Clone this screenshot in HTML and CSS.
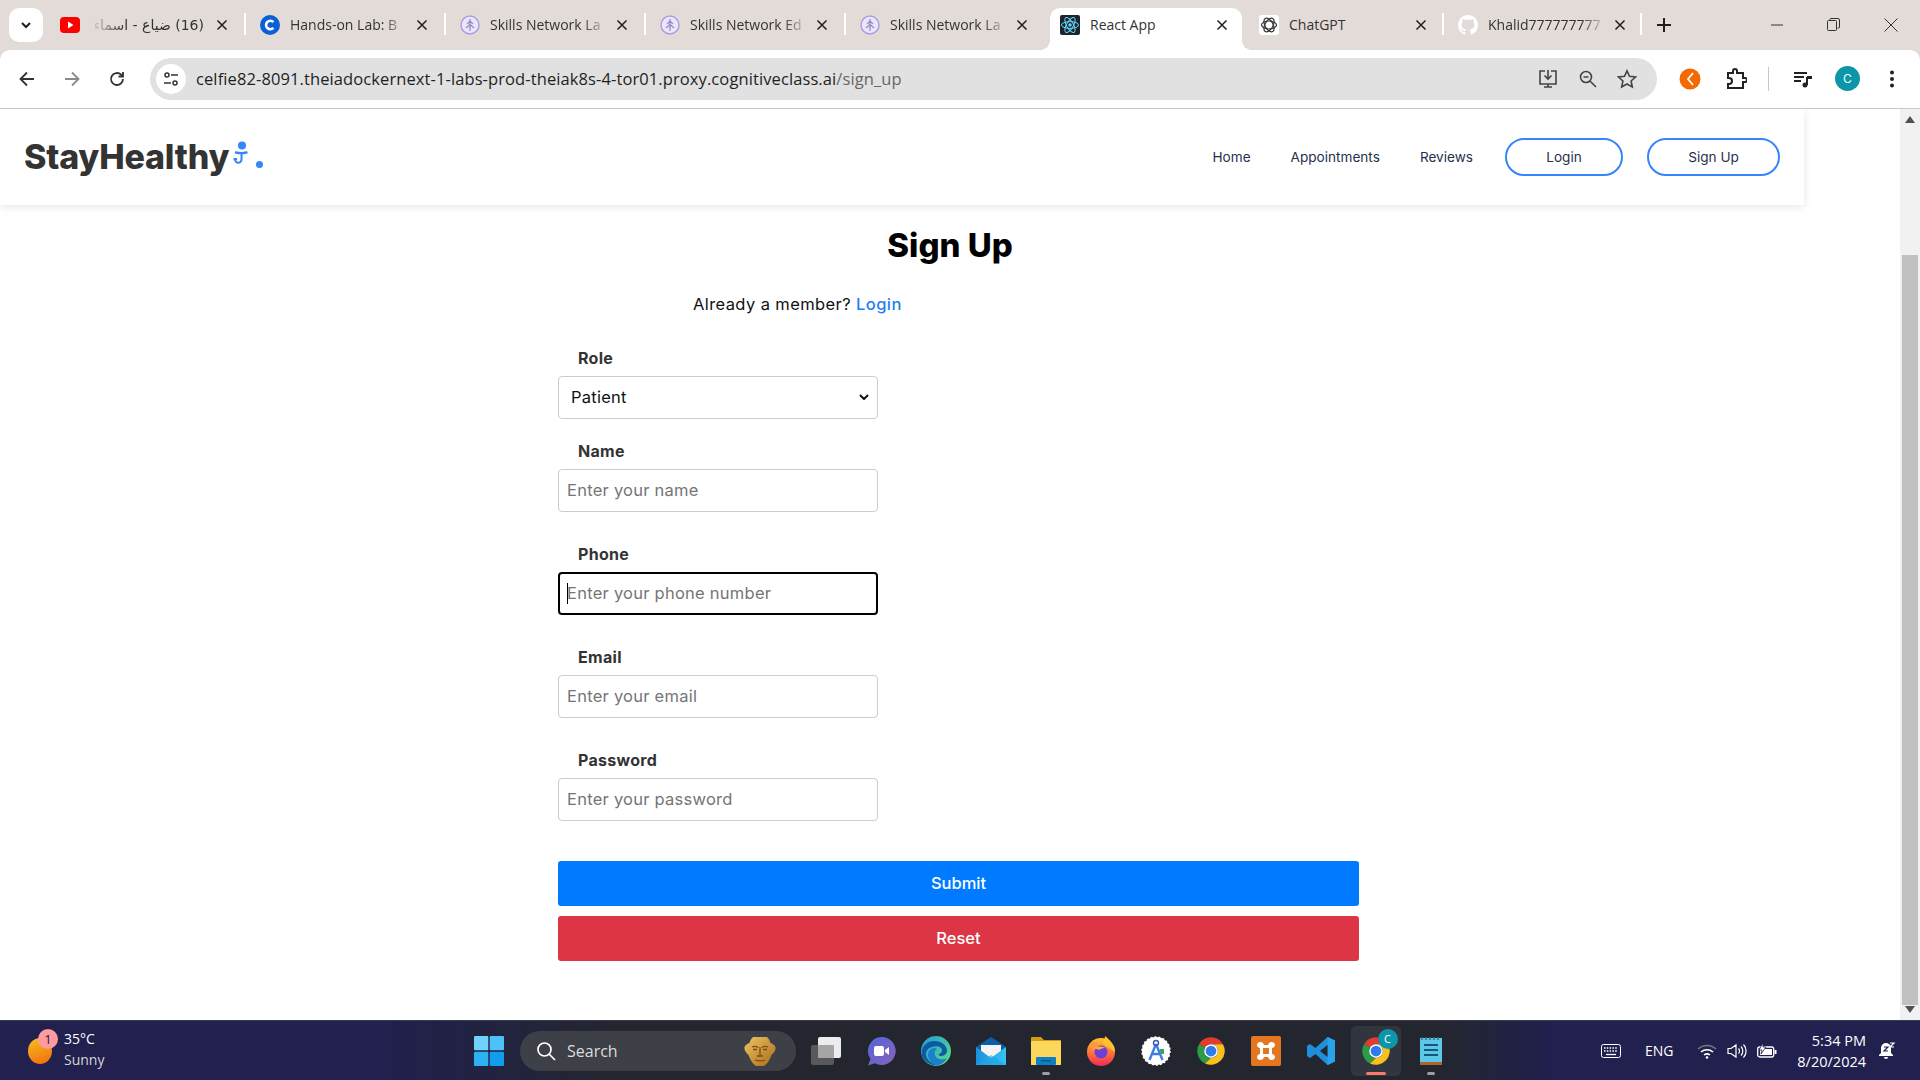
FILE: index.html
```html
<!DOCTYPE html>
<html lang="en">

<head>
    <meta charset="UTF-8">
    <meta name="viewport" content="width=device-width, initial-scale=1.0">
    <title>React App</title>
    <link rel="stylesheet" href="styles.css">
</head>

<body>
    <svg class="defs" width="0" height="0">
        <defs>
            <linearGradient id="g-edge" x1="0" y1="0" x2="1" y2="1"><stop offset="0" stop-color="#1aa0d8" /><stop offset="1" stop-color="#62dc7c" /></linearGradient>
            <linearGradient id="g-meet" x1="0" y1="0" x2="1" y2="1"><stop offset="0" stop-color="#4f66d8" /><stop offset="1" stop-color="#8a62bc" /></linearGradient>
            <linearGradient id="g-mail" x1="0" y1="0" x2="1" y2="0"><stop offset="0" stop-color="#1c8fd8" /><stop offset="1" stop-color="#36c4f5" /></linearGradient>
            <linearGradient id="g-fox" x1="0" y1="0" x2="0" y2="1"><stop offset="0" stop-color="#ffc22e" /><stop offset=".55" stop-color="#ff7139" /><stop offset="1" stop-color="#f0285c" /></linearGradient>
            <linearGradient id="g-mask" x1="0" y1="0" x2="1" y2="1"><stop offset="0" stop-color="#f0c465" /><stop offset="1" stop-color="#a86a18" /></linearGradient>
        </defs>
        <symbol id="i-close" viewBox="0 0 12 12"><path d="M1.500 1.500l9 9M10.500 1.500l-9 9" fill="none" stroke="#1f1f1f" stroke-width="1.500" /></symbol>
        <symbol id="i-skills" viewBox="0 0 20 20">
            <circle cx="10" cy="10" r="9" fill="#ece6fa" stroke="#a99be0" stroke-width="1.400" />
            <path d="M10 4v12M10 6l-3 3M10 6l3 3M10 9.500l-4 3.500M10 9.500l4 3.500" fill="none" stroke="#9a8cc4" stroke-width="1.300" />
        </symbol>
        <symbol id="i-chrome" viewBox="0 0 24 24">
            <path d="M12 1a11 11 0 0 1 9.530 5.500H12a5.500 5.500 0 0 0-4.760 2.750L2.470 6.500A11 11 0 0 1 12 1z" fill="#e33b2e" />
            <path d="M2.470 6.500l4.770 2.750A5.500 5.500 0 0 0 12 17.500l-4.770 4.400A11 11 0 0 1 2.470 6.500z" fill="#2a9d46" />
            <path d="M21.530 6.500A11 11 0 0 1 7.230 21.900L12 17.500a5.500 5.500 0 0 0 4.760-8.250 5.500 5.500 0 0 0-4.760-2.750z" fill="#f7c01d" />
            <circle cx="12" cy="12" r="5.500" fill="#fff" />
            <circle cx="12" cy="12" r="4.300" fill="#2f7bea" />
        </symbol>
    </svg>

    <div class="tabstrip">
        <button class="tab-search">
            <svg width="12" height="12" viewBox="0 0 12 12"><path d="M2 4l4 4 4-4" fill="none" stroke="#1f1f1f" stroke-width="2" /></svg>
        </button>
        <div class="tab">
            <svg class="favicon" viewBox="0 0 20 20"><rect y="2" width="20" height="16" rx="4" fill="#f00" /><path d="M8 6.500l5.500 3.500L8 13.500z" fill="#fff" /></svg>
            <span class="tab-title tab-title-rtl" dir="rtl">(16) ضياع - اسماء</span>
            <svg class="tab-close"><use href="#i-close" /></svg>
        </div>
        <div class="tab">
            <svg class="favicon" viewBox="0 0 20 20"><circle cx="10" cy="10" r="10" fill="#0b5fd6" /><path d="M13.400 7.200a4.200 4.200 0 1 0 0 5.600" fill="none" stroke="#fff" stroke-width="2.600" /></svg>
            <span class="tab-title">Hands-on Lab: B</span>
            <svg class="tab-close"><use href="#i-close" /></svg>
        </div>
        <div class="tab">
            <svg class="favicon"><use href="#i-skills" /></svg>
            <span class="tab-title">Skills Network La</span>
            <svg class="tab-close"><use href="#i-close" /></svg>
        </div>
        <div class="tab">
            <svg class="favicon"><use href="#i-skills" /></svg>
            <span class="tab-title">Skills Network Ed</span>
            <svg class="tab-close"><use href="#i-close" /></svg>
        </div>
        <div class="tab tab-before-active">
            <svg class="favicon"><use href="#i-skills" /></svg>
            <span class="tab-title">Skills Network La</span>
            <svg class="tab-close"><use href="#i-close" /></svg>
        </div>
        <div class="tab tab-active">
            <svg class="favicon" viewBox="0 0 20 20">
                <rect width="20" height="20" rx="2" fill="#20232a" />
                <g fill="none" stroke="#61dafb" stroke-width="1">
                    <ellipse cx="10" cy="10" rx="8.500" ry="3.400" />
                    <ellipse cx="10" cy="10" rx="8.500" ry="3.400" transform="rotate(60 10 10)" />
                    <ellipse cx="10" cy="10" rx="8.500" ry="3.400" transform="rotate(120 10 10)" />
                </g>
                <circle cx="10" cy="10" r="1.700" fill="#61dafb" />
            </svg>
            <span class="tab-title tab-title-plain">React App</span>
            <svg class="tab-close"><use href="#i-close" /></svg>
        </div>
        <div class="tab tab-gpt">
            <svg class="favicon" viewBox="0 0 20 20">
                <rect width="20" height="20" rx="3" fill="#fff" />
                <g fill="none" stroke="#333" stroke-width="1.200">
                    <ellipse cx="10" cy="10" rx="7.500" ry="4" />
                    <ellipse cx="10" cy="10" rx="7.500" ry="4" transform="rotate(60 10 10)" />
                    <ellipse cx="10" cy="10" rx="7.500" ry="4" transform="rotate(120 10 10)" />
                </g>
            </svg>
            <span class="tab-title tab-title-plain">ChatGPT</span>
            <svg class="tab-close"><use href="#i-close" /></svg>
        </div>
        <div class="tab tab-github">
            <svg class="favicon" viewBox="0 0 16 16"><path fill="#fff" d="M8 0C3.580 0 0 3.580 0 8c0 3.540 2.290 6.530 5.470 7.590.4.070.55-.17.55-.38 0-.19-.01-.82-.01-1.490-2.010.37-2.530-.49-2.690-.94-.09-.23-.48-.94-.82-1.130-.28-.15-.68-.52-.01-.53.63-.01 1.080.58 1.230.82.72 1.210 1.870.87 2.330.66.07-.52.28-.87.51-1.070-1.780-.2-3.640-.89-3.640-3.950 0-.87.31-1.590.82-2.150-.08-.2-.36-1.020.08-2.120 0 0 .67-.21 2.200.82.64-.18 1.320-.27 2-.27.68 0 1.360.09 2 .27 1.530-1.040 2.200-.82 2.200-.82.44 1.100.16 1.920.08 2.120.51.56.82 1.270.82 2.150 0 3.070-1.870 3.750-3.650 3.950.29.25.54.73.54 1.480 0 1.070-.01 1.930-.01 2.200 0 .21.15.46.55.38A8.013 8.013 0 0016 8c0-4.420-3.580-8-8-8z" /></svg>
            <span class="tab-title">Khalid777777777</span>
            <svg class="tab-close"><use href="#i-close" /></svg>
        </div>
        <svg class="new-tab" width="14" height="14" viewBox="0 0 14 14"><path d="M7 0v14M0 7h14" stroke="#1f1f1f" stroke-width="2" /></svg>
        <div class="window-controls">
            <svg width="12" height="12" viewBox="0 0 12 12"><path d="M0 6h12" stroke="#333" stroke-width="1" /></svg>
            <svg width="13" height="13" viewBox="0 0 13 13"><path d="M3 2.500V1.500a1 1 0 0 1 1-1h7a1.500 1.500 0 0 1 1.500 1.500v7a1 1 0 0 1-1 1h-1M1.500 2.500h7a1 1 0 0 1 1 1v8a1 1 0 0 1-1 1h-7a1 1 0 0 1-1-1v-8a1 1 0 0 1 1-1z" fill="none" stroke="#333" /></svg>
            <svg width="14" height="14" viewBox="0 0 14 14"><path d="M.5.5l13 13M13.500.5l-13 13" stroke="#333" stroke-width="1" /></svg>
        </div>
    </div>

    <div class="toolbar">
        <svg class="tool-btn" width="18" height="18" viewBox="0 0 18 18"><path d="M16 9H3M9 2.500L2.500 9 9 15.500" fill="none" stroke="#333" stroke-width="1.800" /></svg>
        <svg class="tool-btn" width="18" height="18" viewBox="0 0 18 18"><path d="M2 9h13M9 2.500L15.500 9 9 15.500" fill="none" stroke="#8b8b8b" stroke-width="1.800" /></svg>
        <svg class="tool-btn" width="18" height="18" viewBox="0 0 18 18"><path d="M15 9a6 6 0 1 1-1.800-4.300L15 6.500M15 2v4.500h-4.500" fill="none" stroke="#333" stroke-width="1.800" /></svg>
        <div class="omnibox">
            <span class="site-info">
                <svg width="16" height="16" viewBox="0 0 16 16"><g fill="none" stroke="#333" stroke-width="1.500"><circle cx="4" cy="4" r="2" /><path d="M8 4h7M1 12h7" /><circle cx="12" cy="12" r="2" /></g></svg>
            </span>
            <span class="url">celfie82-8091.theiadockernext-1-labs-prod-theiak8s-4-tor01.proxy.cognitiveclass.ai<span class="url-path">/sign_up</span></span>
            <span class="omni-actions">
                <svg width="22" height="22" viewBox="0 0 22 22"><path d="M8 3H3v13h16V3h-5M7 19h8M11 16v3M11 2v9M7.500 7.500L11 11l3.500-3.500" fill="none" stroke="#444" stroke-width="1.600" /></svg>
                <svg width="20" height="20" viewBox="0 0 20 20"><circle cx="8" cy="8" r="5.500" fill="none" stroke="#444" stroke-width="1.600" /><path d="M12.200 12.200L18 18M5.500 8h5" stroke="#444" stroke-width="1.600" /></svg>
                <svg width="20" height="20" viewBox="0 0 20 20"><path d="M10 1.800l2.500 5.500 6 .7-4.400 4 1.200 6L10 15l-5.300 3 1.200-6-4.400-4 6-.7z" fill="none" stroke="#444" stroke-width="1.600" /></svg>
            </span>
        </div>
        <div class="ext-actions">
            <svg class="ext-orange" width="22" height="22" viewBox="0 0 22 22"><circle cx="11" cy="11" r="10.500" fill="#f56a00" /><path d="M14 5l-5 6 5 6" fill="none" stroke="#fff" stroke-width="1.800" /></svg>
            <svg class="ext-puzzle" width="22" height="22" viewBox="0 0 22 22"><path d="M3 5h5V3a2 2 0 0 1 4 0v2h6v5h2a2 2 0 0 1 0 4h-2v6H3v-4h1a2.500 2.500 0 0 0 0-6H3z" fill="none" stroke="#222" stroke-width="2" /></svg>
            <span class="ext-sep"></span>
            <svg class="ext-media" width="20" height="20" viewBox="0 0 20 20"><path d="M1 4h13M1 8h10M1 12h7" stroke="#222" stroke-width="2" /><path d="M14 8v8" stroke="#222" stroke-width="2" /><circle cx="12" cy="16" r="2.500" fill="#222" /><path d="M14 7h5v3h-5z" fill="#222" /></svg>
            <span class="avatar">C</span>
            <svg class="ext-menu" width="6" height="18" viewBox="0 0 6 18"><circle cx="3" cy="2.500" r="2" fill="#222" /><circle cx="3" cy="9" r="2" fill="#222" /><circle cx="3" cy="15.500" r="2" fill="#222" /></svg>
        </div>
    </div>

    <div class="viewport">
        <div class="page">
            <nav class="navbar">
                <a class="logo">StayHealthy
                    <svg class="logo-icon" width="16" height="24" viewBox="0 0 16 24">
                        <circle cx="9" cy="4.500" r="4" fill="#3685fb" />
                        <path d="M3 11.500c3 .8 7 .8 10.500 0" fill="none" stroke="#3685fb" stroke-width="2.400" stroke-linecap="round" />
                        <path d="M8.500 12v6.500a3.200 3.200 0 0 1-6.400 0" fill="none" stroke="#3685fb" stroke-width="2" />
                        <path d="M.5 18h3.500" stroke="#3685fb" stroke-width="2" />
                    </svg>
                    <span class="logo-dot"></span>
                </a>
                <ul class="nav-links">
                    <li><a>Home</a></li>
                    <li><a>Appointments</a></li>
                    <li class="nav-reviews"><a>Reviews</a></li>
                    <li><button class="nav-btn nav-login">Login</button></li>
                    <li><button class="nav-btn nav-signup">Sign Up</button></li>
                </ul>
            </nav>

            <main class="signup">
                <h1 class="signup-title">Sign Up</h1>
                <p class="signup-member">Already a member? <a>Login</a></p>
                <form class="signup-form">
                    <div class="form-group form-group-tight">
                        <label for="role">Role</label>
                        <select id="role" class="form-control form-select">
                            <option>Patient</option>
                        </select>
                    </div>
                    <div class="form-group">
                        <label for="name">Name</label>
                        <input id="name" class="form-control" type="text" placeholder="Enter your name">
                    </div>
                    <div class="form-group">
                        <label for="phone">Phone</label>
                        <div class="focus-wrap">
                            <input id="phone" class="form-control form-control-focus" type="tel" placeholder="Enter your phone number">
                            <span class="caret"></span>
                        </div>
                    </div>
                    <div class="form-group">
                        <label for="email">Email</label>
                        <input id="email" class="form-control" type="email" placeholder="Enter your email">
                    </div>
                    <div class="form-group">
                        <label for="password">Password</label>
                        <input id="password" class="form-control" type="password" placeholder="Enter your password">
                    </div>
                    <button class="form-btn form-btn-submit" type="button">Submit</button>
                    <button class="form-btn form-btn-reset" type="button">Reset</button>
                </form>
            </main>
        </div>

        <div class="scrollbar">
            <svg width="10" height="7" viewBox="0 0 10 7"><path d="M5 0l5 7H0z" fill="#505050" /></svg>
            <div class="scroll-track"><div class="scroll-thumb"></div></div>
            <svg width="10" height="7" viewBox="0 0 10 7"><path d="M5 7L0 0h10z" fill="#505050" /></svg>
        </div>
    </div>

    <footer class="taskbar">
        <div class="weather">
            <span class="weather-sun"></span>
            <span class="weather-badge">1</span>
            <div class="weather-text">
                <span>35°C</span>
                <span class="weather-sub">Sunny</span>
            </div>
        </div>

        <span class="start-btn">
            <svg width="30" height="30" viewBox="0 0 30 30">
                <rect width="14.300" height="14.300" rx="1" fill="#6fd3fb" />
                <rect x="15.700" width="14.300" height="14.300" rx="1" fill="#4cc2f8" />
                <rect y="15.700" width="14.300" height="14.300" rx="1" fill="#2db0f4" />
                <rect x="15.700" y="15.700" width="14.300" height="14.300" rx="1" fill="#129cee" />
            </svg>
        </span>

        <div class="search-pill">
            <svg width="20" height="20" viewBox="0 0 20 20"><circle cx="8.500" cy="8.500" r="6.500" fill="none" stroke="#fff" stroke-width="1.700" /><path d="M13 13l6 6" stroke="#fff" stroke-width="1.700" /></svg>
            <span class="search-label">Search</span>
            <svg class="search-mask" width="32" height="30" viewBox="0 0 32 30">
                <path d="M9 1h14c2 2 3 4 3.500 6 2 .5 4 2 5 4 .5 3-1.500 6-4 8-1.500 4-4 9-7.500 11h-8c-3.500-2-6-7-7.500-11-2.500-2-4.500-5-4-8 1-2 3-3.500 5-4C6 5 7 3 9 1z" fill="url(#g-mask)" />
                <path d="M8 11c2-1 4-1 6 .5M18 11.500c2-1.500 4-1.500 6-.5M9 13.500h4M19 13.500h4M16 11v8M13 20h6M11 24c3 1 7 1 10 0" fill="none" stroke="#7a4d12" stroke-width="1.300" />
            </svg>
        </div>

        <div class="apps">
            <span class="app">
                <svg width="30" height="28" viewBox="0 0 30 28"><rect y="8" width="23" height="20" rx="2" fill="#595959" /><rect x="7" y="0" width="23" height="21" rx="2" fill="#ececec" /><rect x="7" y="8" width="16" height="13" rx="1" fill="#a5a5a5" /></svg>
            </span>
            <span class="app">
                <svg width="30" height="30" viewBox="0 0 30 30"><path d="M15.500 1a14 14 0 1 1-6.500 26.300L2 29.500l2.500-6.500A14 14 0 0 1 15.500 1z" fill="url(#g-meet)" /><rect x="8" y="10" width="10" height="10" rx="2" fill="#fff" /><path d="M19 14l4-3v8l-4-3z" fill="#fff" /></svg>
            </span>
            <span class="app">
                <svg width="30" height="30" viewBox="0 0 30 30">
                    <circle cx="15" cy="15" r="15" fill="url(#g-edge)" />
                    <path d="M1 20C-1 10 7 4 15 5c7 1 11 5 11 10 0 3-3 5-7 5l-2-2c3 0 4-2 4-4 0-3-5-5-10-3-4 1-6 4-6 7 0 4 4 10 12 11A15 15 0 0 1 1 20z" fill="#0f5aa6" />
                    <path d="M8 15c2-3 6-4 8-2-2 1-3 3-2 6 1 4 7 6 12 3-2 4-7 8-12 7C9 27 5 20 8 15z" fill="#1a7fd0" />
                </svg>
            </span>
            <span class="app">
                <svg width="30" height="28" viewBox="0 0 30 28">
                    <path d="M15 0l15 10v4H0v-4z" fill="#0f5fa8" />
                    <path d="M5 8h20v9l-10 5-10-5z" fill="#f4f4f4" />
                    <path d="M0 10l15 11 15-11v18H0z" fill="url(#g-mail)" />
                    <path d="M0 28l15-10 15 10z" fill="#22a5e8" opacity=".6" />
                </svg>
            </span>
            <span class="app app-running">
                <svg width="30" height="28" viewBox="0 0 30 28">
                    <path d="M0 1a1 1 0 0 1 1-1h9l3 3h17v25H0z" fill="#d69b12" />
                    <rect y="4" width="30" height="24" rx="1" fill="#fbd75b" />
                    <rect x="5" y="20" width="20" height="8" rx="1" fill="#0e7fc4" />
                    <rect x="10" y="23" width="10" height="1.500" fill="#0a5a90" />
                </svg>
            </span>
            <span class="app">
                <svg width="28" height="30" viewBox="0 0 28 30">
                    <circle cx="14" cy="16" r="14" fill="url(#g-fox)" />
                    <path d="M18 0c5 4 10 9 10 16L15 7c2-2 3-4 3-7z" fill="#ffc22e" />
                    <path d="M2 9c1-2 3-3 5-3 1 2 5 3 8 3l-5 9z" fill="#ff9640" />
                    <circle cx="14" cy="16" r="6.500" fill="#6e3fd8" />
                    <path d="M7 12c3-2 8-2 11 0-3 0-5 1-6 2z" fill="#ffb02e" />
                </svg>
            </span>
            <span class="app">
                <svg width="30" height="30" viewBox="0 0 30 30">
                    <circle cx="15" cy="15" r="14" fill="#fff" stroke="#fff" stroke-width="1.500" stroke-dasharray="2 2" />
                    <path d="M15 8L8.500 24M15 8l6.500 16M10.500 18h9" fill="none" stroke="#3e7ee6" stroke-width="2.400" />
                    <circle cx="15" cy="7" r="2.500" fill="none" stroke="#3e5fa6" stroke-width="1.500" />
                    <rect x="19" y="13" width="4" height="5" fill="#3ba55d" />
                </svg>
            </span>
            <span class="app">
                <svg width="30" height="30"><use href="#i-chrome" /></svg>
            </span>
            <span class="app">
                <svg width="30" height="30" viewBox="0 0 30 30">
                    <rect width="30" height="30" rx="2" fill="#e4761f" />
                    <path d="M6 9c0-3 4-4 6-2l1 2h4l1-2c2-2 6-1 6 2 0 2-2 3-3 3v6c1 0 3 1 3 3 0 3-4 4-6 2l-1-2h-4l-1 2c-2 2-6 1-6-2 0-2 2-3 3-3v-6c-1 0-3-1-3-3z" fill="#fff" />
                    <path d="M12 12h6v6h-6z" fill="#e4761f" />
                </svg>
            </span>
            <span class="app">
                <svg width="30" height="30" viewBox="0 0 30 30"><path d="M21.500 1L29 4.500v21L21.500 29 9.500 18l-5.500 4-3-2v-10l3-2 5.500 4z" fill="#1e8fd8" /><path d="M21.500 1L29 4.500v21L21.500 29z" fill="#2aa3ec" /><path d="M21.500 9v12l-7.500-6z" fill="#23262f" /></svg>
            </span>
            <span class="app app-active">
                <svg width="30" height="30"><use href="#i-chrome" /></svg>
                <span class="app-profile">C</span>
            </span>
            <span class="app app-running">
                <svg width="22" height="30" viewBox="0 0 22 30"><rect y="2" width="22" height="25" fill="#5cc7e8" /><rect y="26" width="22" height="3" fill="#b0642a" /><path d="M2 1v3M6 1v3M10 1v3M14 1v3M18 1v3" stroke="#2d6f8c" stroke-width="1.500" /><path d="M4 9h14M4 14h14M4 19h14" stroke="#11587a" stroke-width="2" /></svg>
            </span>
        </div>

        <div class="tray">
            <svg class="tray-keyboard" width="20" height="14" viewBox="0 0 20 14"><rect x=".5" y=".5" width="19" height="13" rx="2" fill="none" stroke="#fff" /><path d="M3 4h14M3 7h14" stroke="#fff" stroke-dasharray="1.500 1.300" stroke-width="1.300" /><path d="M5 10.500h10" stroke="#fff" stroke-width="1.300" /></svg>
            <span class="tray-lang">ENG</span>
            <svg class="tray-wifi" width="20" height="16" viewBox="0 0 20 16"><g fill="none" stroke-width="1.500"><path d="M1 6a13 13 0 0 1 18 0" stroke="#777" /><path d="M4 9a9 9 0 0 1 12 0M7 12a5 5 0 0 1 6 0" stroke="#fff" /></g><circle cx="10" cy="14.500" r="1.300" fill="#fff" /></svg>
            <svg class="tray-volume" width="20" height="16" viewBox="0 0 20 16"><path d="M1 5.500h3L9 2v12L4 10.500H1zM11.500 5.500a3.500 3.500 0 0 1 0 5M14 3.500a6.500 6.500 0 0 1 0 9M16.500 1.500a9.500 9.500 0 0 1 0 13" fill="none" stroke="#fff" stroke-width="1.200" /></svg>
            <svg class="tray-battery" width="20" height="16" viewBox="0 0 20 16"><rect x=".7" y="4" width="16" height="10" rx="2" fill="none" stroke="#fff" stroke-width="1.300" /><rect x="3" y="6" width="12" height="6" fill="#fff" /><rect x="17.500" y="7" width="2" height="4" fill="#fff" /><path d="M6 0L2 7h3l-1 4 5-7H6z" fill="#fff" stroke="#21204f" stroke-width=".8" /></svg>
            <div class="tray-clock">
                <span>5:34 PM</span>
                <span>8/20/2024</span>
            </div>
            <svg class="tray-bell" width="18" height="18" viewBox="0 0 18 18"><path d="M8 1a5 5 0 0 1 5 5v5l2 2v1H1v-1l2-2V6a5 5 0 0 1 5-5zM6 15h4a2 2 0 0 1-4 0z" fill="#fff" /><path d="M6 5h4l-4 4h4" fill="none" stroke="#21204f" stroke-width="1.200" /><path d="M12 1h4l-4 4h4" fill="none" stroke="#fff" stroke-width="1.200" /></svg>
        </div>
    </footer>
</body>

</html>
```

FILE: styles.css
```css
* {
    margin: 0;
    padding: 0;
    box-sizing: border-box;
}

body {
    display: flex;
    flex-direction: column;
    height: 100vh;
    overflow: hidden;
    font-family: Inter, "Liberation Sans", sans-serif;
    background-color: #e3dbd8;
}

.defs {
    position: absolute;
}

/* browser tabs */
.tabstrip {
    display: flex;
    align-items: center;
    height: 50px;
    padding-left: 9px;
    background-color: #e3dbd8;
    font-family: "Open Sans", sans-serif;
    font-size: 14px;
    color: #333;
}

.tab-search {
    display: flex;
    justify-content: center;
    align-items: center;
    width: 34px;
    height: 34px;
    margin-right: 3px;
    border: none;
    border-radius: 10px;
    background-color: #fff;
}

.tab {
    position: relative;
    display: flex;
    align-items: center;
    flex: none;
    align-self: flex-end;
    width: 200px;
    height: 42px;
    padding: 0 16px 8px 14px;
    border-right: 2px solid #fff;
    border-image: linear-gradient(transparent 6px, #fff 6px, #fff 27px, transparent 27px) 1;
}

.tab-before-active {
    width: 204px;
    padding-right: 22px;
    border-right: none;
}

.tab-active {
    width: 192px;
    padding: 0 14px 8px 10px;
    border: none;
    border-radius: 10px 10px 0 0;
    background-color: #fff;
}

.tab-active::before,
.tab-active::after {
    content: "";
    position: absolute;
    bottom: 0;
    width: 10px;
    height: 10px;
}

.tab-active::before {
    left: -10px;
    background: radial-gradient(circle at 0 0, transparent 10px, #fff 10px);
}

.tab-active::after {
    right: -10px;
    background: radial-gradient(circle at 100% 0, transparent 10px, #fff 10px);
}

.tab-gpt {
    width: 202px;
    padding-left: 17px;
    padding-right: 15px;
}

.tab-github {
    width: 198px;
    padding-right: 14px;
}

.favicon {
    flex: none;
    width: 20px;
    height: 20px;
    margin-right: 10px;
}

.tab-title {
    flex: 1;
    overflow: hidden;
    white-space: nowrap;
    -webkit-mask-image: linear-gradient(90deg, #000 80%, transparent 102%);
    mask-image: linear-gradient(90deg, #000 80%, transparent 102%);
}

.tab-title-plain {
    -webkit-mask-image: none;
    mask-image: none;
}

.tab-title-rtl {
    font-family: "DejaVu Sans", sans-serif;
    font-size: 14px;
    padding-right: 2px;
    -webkit-mask-image: linear-gradient(90deg, transparent, #000 30%);
    mask-image: linear-gradient(90deg, transparent, #000 30%);
}

.tab-close {
    flex: none;
    width: 12px;
    height: 12px;
    margin-left: 10px;
}

.new-tab {
    margin-left: 15px;
}

.window-controls {
    display: flex;
    align-items: center;
    gap: 44px;
    margin-left: auto;
    padding-right: 22px;
}

/* address bar row */
.toolbar {
    display: flex;
    align-items: center;
    height: 59px;
    padding-left: 18px;
    border-top-left-radius: 10px;
    border-top-right-radius: 10px;
    border-bottom: 1px solid #c9c9c9;
    background-color: #fff;
}

.tool-btn {
    flex: none;
    margin-right: 27px;
}

.omnibox {
    display: flex;
    align-items: center;
    width: 1507px;
    height: 42px;
    margin-left: -3px;
    padding-left: 6px;
    border-radius: 21px;
    background-color: #e1e1e1;
}

.site-info {
    display: flex;
    justify-content: center;
    align-items: center;
    width: 30px;
    height: 30px;
    border-radius: 50%;
    background-color: #fff;
}

.url {
    margin-left: 10px;
    font-family: "Open Sans", sans-serif;
    font-size: 16.5px;
    letter-spacing: 0.1px;
    color: #1f1f1f;
    white-space: nowrap;
}

.url-path {
    color: #666;
}

.omni-actions {
    display: flex;
    align-items: center;
    gap: 19px;
    margin-left: auto;
    padding-right: 20px;
}

.ext-actions {
    display: flex;
    align-items: center;
    margin-left: 22px;
}

.ext-puzzle {
    margin-left: 24px;
}

.ext-sep {
    width: 1px;
    height: 24px;
    margin: 0 24px 0 21px;
    background-color: #c7c7c7;
}

.avatar {
    display: flex;
    justify-content: center;
    align-items: center;
    width: 25px;
    height: 25px;
    margin-left: 22px;
    border-radius: 50%;
    background-color: #0c96a8;
    color: #fff;
    font-size: 12px;
}

.ext-menu {
    margin-left: 29px;
}

/* page */
.viewport {
    display: flex;
    height: 912px;
    background-color: #fff;
}

.page {
    flex: 1;
    overflow: hidden;
}

.navbar {
    display: flex;
    justify-content: space-between;
    align-items: center;
    width: 1804px;
    height: 96px;
    padding: 0 24px;
    background-color: #fff;
    box-shadow: 0 2px 8px rgba(0, 0, 0, 0.1);
}

.logo {
    display: flex;
    align-items: center;
    font-size: 34px;
    font-weight: 800;
    letter-spacing: -0.2px;
    color: #333;
}

.logo-icon {
    margin-left: 4px;
    margin-top: -8px;
}

.logo-dot {
    width: 7px;
    height: 7px;
    margin-left: 7px;
    margin-top: 15px;
    border-radius: 50%;
    background-color: #3685fb;
}

.nav-links {
    display: flex;
    align-items: center;
    gap: 40px;
    list-style: none;
    font-size: 13.6px;
    color: #25314d;
}

.nav-reviews {
    margin-right: -8px;
}

.nav-btn {
    height: 38px;
    border: 2px solid #3685fb;
    border-radius: 20px;
    background-color: #fff;
    font-family: inherit;
    font-size: 13.6px;
    color: #25314d;
}

.nav-login {
    width: 118px;
}

.nav-signup {
    width: 133px;
    margin-left: -16px;
}

/* sign up form */
.signup {
    padding-top: 17px;
}

.signup-title {
    font-size: 33px;
    font-weight: 800;
    line-height: 46px;
    text-align: center;
    color: #000;
}

.signup-member {
    margin: 24px 0 0 693px;
    font-size: 16.5px;
    letter-spacing: 0.4px;
    line-height: 24px;
    color: #111;
}

.signup-member a {
    color: #1f7df5;
    font-weight: 500;
}

.signup-form {
    width: 801px;
    margin: 29px 0 0 558px;
}

.form-group {
    margin-bottom: 29px;
}

.form-group-tight {
    margin-bottom: 19px;
}

.form-group label {
    display: block;
    height: 25px;
    margin-bottom: 6px;
    padding-left: 20px;
    font-size: 16px;
    font-weight: 700;
    letter-spacing: 0.3px;
    line-height: 26px;
    color: #333;
}

.form-control {
    display: block;
    width: 320px;
    height: 43px;
    padding: 0 8px;
    border: 1px solid #ccc;
    border-radius: 4px;
    background-color: #fff;
    font-family: inherit;
    font-size: 16.5px;
    letter-spacing: 0.25px;
    color: #111;
}

.form-control::placeholder {
    color: #757575;
}

.form-select {
    padding-left: 12px;
    appearance: none;
    background: #fff url("data:image/svg+xml,%3Csvg xmlns='http://www.w3.org/2000/svg' width='10' height='6'%3E%3Cpath d='M1 1l4 4 4-4' fill='none' stroke='%23111' stroke-width='2'/%3E%3C/svg%3E") no-repeat right 8px center;
}

.form-control-focus {
    border: 2px solid #000;
    padding-left: 7px;
}

.focus-wrap {
    position: relative;
}

.caret {
    position: absolute;
    left: 9px;
    top: 11px;
    width: 1px;
    height: 21px;
    background-color: #000;
}

.form-btn {
    display: block;
    width: 100%;
    height: 45px;
    border: none;
    border-radius: 3px;
    font-family: inherit;
    font-size: 16.5px;
    font-weight: 500;
    color: #fff;
}

.form-btn-submit {
    margin-top: 40px;
    background-color: #007bff;
}

.form-btn-reset {
    margin-top: 10px;
    background-color: #dc3545;
}

/* page scrollbar */
.scrollbar {
    display: flex;
    flex-direction: column;
    align-items: center;
    width: 20px;
    padding: 7px 0;
    background-color: #f1f1f1;
}

.scroll-track {
    flex: 1;
    width: 100%;
    padding: 132px 2px 1px;
}

.scroll-thumb {
    height: 100%;
    margin-bottom: 6px;
    background-color: #c1c1c1;
}

/* windows taskbar */
.taskbar {
    display: flex;
    align-items: center;
    height: 60px;
    border-top: 1px solid #3a3c52;
    background: linear-gradient(90deg, #21204f 0, #21204f 20%, #23262f 32%, #23262f 75%, #21204f 81%);
    color: #fff;
    font-family: "Open Sans", sans-serif;
}

.weather {
    position: relative;
    display: flex;
    align-items: center;
    flex: none;
    width: 474px;
    padding-left: 28px;
}

.weather-sun {
    width: 24px;
    height: 26px;
    border-radius: 50%;
    background: linear-gradient(160deg, #f5c020, #f26a0c);
}

.weather-badge {
    position: absolute;
    left: 38px;
    top: -3px;
    width: 20px;
    height: 20px;
    border-radius: 50%;
    background-color: #ff9aa2;
    color: #222;
    font-size: 13px;
    line-height: 20px;
    text-align: center;
}

.weather-text {
    display: flex;
    flex-direction: column;
    margin-top: -4px;
    margin-left: 12px;
    font-size: 14px;
    line-height: 21px;
}

.weather-sub {
    color: #d5d5d5;
}

.start-btn {
    display: flex;
    flex: none;
    width: 46px;
}

.search-pill {
    display: flex;
    align-items: center;
    flex: none;
    width: 276px;
    height: 40px;
    padding: 0 20px 0 16px;
    border-radius: 20px;
    background-color: #3d4047;
}

.search-label {
    margin-left: 11px;
    font-size: 16px;
    color: #dcdcdc;
}

.search-mask {
    margin-left: auto;
}

.apps {
    display: flex;
    flex: none;
    margin-left: 2px;
}

.app {
    position: relative;
    display: flex;
    justify-content: center;
    align-items: center;
    width: 55px;
    height: 50px;
}

.app-running::after,
.app-active::after {
    content: "";
    position: absolute;
    bottom: 1px;
    left: 50%;
    width: 8px;
    height: 3px;
    margin-left: -4px;
    border-radius: 2px;
    background-color: #9b9ea3;
}

.app-active {
    width: 50px;
    margin: 0 2.5px;
    border-radius: 5px;
    background-color: #31353e;
}

.app-active::after {
    width: 20px;
    margin-left: -10px;
    background-color: #f47c6c;
}

.app-profile {
    position: absolute;
    top: 3px;
    right: 3px;
    width: 20px;
    height: 20px;
    border-radius: 50%;
    background-color: #0c96a8;
    font-size: 11px;
    line-height: 20px;
    text-align: center;
}

.tray {
    display: flex;
    align-items: center;
    flex: none;
    margin-left: 143px;
}

.tray-lang {
    width: 29px;
    margin-left: 24px;
    font-size: 14px;
}

.tray-wifi {
    margin-left: 23px;
}

.tray-volume {
    margin-left: 10px;
}

.tray-battery {
    margin-left: 10px;
}

.tray-clock {
    display: flex;
    flex-direction: column;
    align-items: flex-end;
    width: 89px;
    font-size: 14.5px;
    line-height: 21px;
}

.tray-bell {
    margin-left: 12px;
}
```
